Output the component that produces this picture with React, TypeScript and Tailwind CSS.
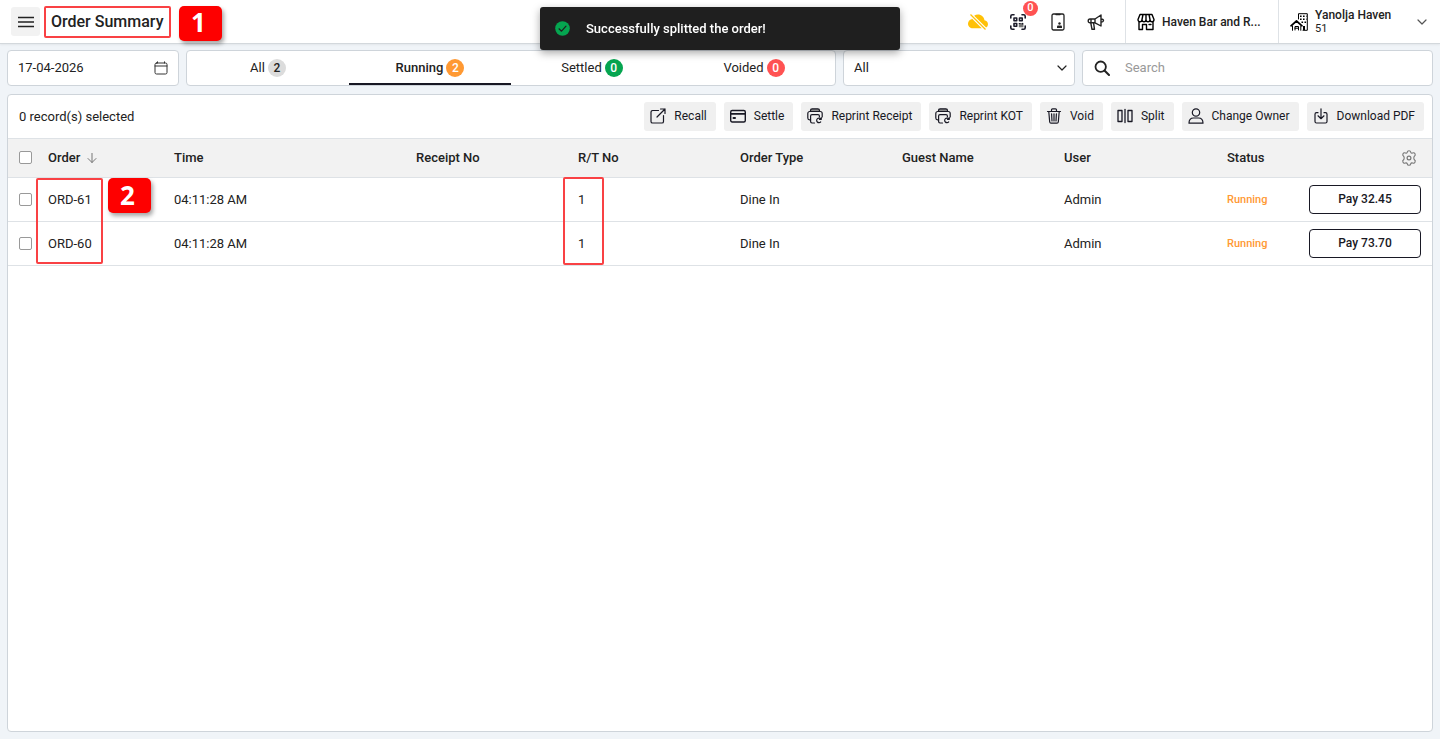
import { useState } from "react";
import type { ReactNode } from "react";
import { BsCloudSlashFill } from "react-icons/bs";

type IconProps = { className?: string; children: ReactNode; box?: string };

function Icon({ className = "size-4", children, box = "0 0 16 16" }: IconProps) {
  return (
    <svg
      viewBox={box}
      className={`shrink-0 ${className}`}
      fill="none"
      stroke="currentColor"
      strokeWidth="1.2"
      strokeLinecap="round"
      strokeLinejoin="round"
      aria-hidden="true"
    >
      {children}
    </svg>
  );
}

const RecallIcon = () => (
  <Icon>
    <path d="M8.500 2.500H2.600C1.700 2.500 1 3.200 1 4.100V13.400C1 14.300 1.700 15 2.600 15H11.900C12.800 15 13.500 14.300 13.500 13.400V7.500M10.500 1H15V5.500M15 1L7 9" />
  </Icon>
);

const SettleIcon = () => (
  <Icon>
    <rect x="0.700" y="2.500" width="14.600" height="11.500" rx="1.500" strokeWidth="1.400" />
    <path d="M1 5.800H15" strokeWidth="1.800" />
    <path d="M3.500 10H5" strokeWidth="2" />
  </Icon>
);

const ReprintIcon = () => (
  <Icon>
    <path d="M3.500 3.500V2.500C3.500 1.500 4.200 .8 5.200 .8H10.800C11.800 .8 12.500 1.500 12.500 2.500V3.500Z" fill="#8a8a8a" />
    <path d="M3.500 11.800H2.600C1.600 11.800.8 11 .8 10V5.500C.8 4.400 1.700 3.500 2.800 3.500H13.200C14.300 3.500 15.200 4.400 15.200 5.500V9" />
    <path d="M7.500 15H5C4.200 15 3.600 14.400 3.600 13.600V8C3.600 7.200 4.200 6.600 5 6.600H11C11.800 6.600 12.400 7.200 12.400 8V8.800" />
    <path d="M13.800 11A2.300 2.300 0 1 0 13.700 13.900M14.300 9.600V11.300H12.500" />
  </Icon>
);

const VoidIcon = () => (
  <Icon>
    <path d="M1.500 3.500H14.500M5.500 3.300V1.800C5.500 1.200 5.900.8 6.500.8H9.500C10.100.8 10.500 1.200 10.500 1.800V3.300M2.800 3.700L3.700 14C3.800 14.700 4.200 15.200 5 15.200H11C11.800 15.200 12.200 14.700 12.300 14L13.200 3.700M5.600 5.800L6 13M8 5.800V13M10.400 5.800L10 13" />
  </Icon>
);

const SplitIcon = () => (
  <Icon>
    <rect x="1" y="2.500" width="4" height="11" strokeWidth="1.300" />
    <rect x="11" y="2.500" width="4" height="11" strokeWidth="1.300" />
    <path d="M8 1.500V14.500" strokeWidth="1.300" />
  </Icon>
);

const OwnerIcon = () => (
  <Icon>
    <circle cx="8" cy="4.500" r="3.700" />
    <path d="M1 15.200C1 11.500 3.200 10 5.500 10H10.500C12.800 10 15 11.500 15 15.200Z" />
  </Icon>
);

const DownloadIcon = () => (
  <Icon>
    <path d="M5 4.700H3.500C2.500 4.700 2 5.200 2 6.200V13.500C2 14.500 2.500 15 3.500 15H12.500C13.500 15 14 14.500 14 13.500V6.200C14 5.200 13.500 4.700 12.500 4.700H11M8 .8V10.500M5 7.800L8 10.700L11 7.800" />
  </Icon>
);

const GearIcon = () => (
  <Icon className="size-4 text-[#777]">
    <circle cx="8" cy="8" r="1.900" />
    <path
      strokeWidth="1.100"
      d="M6.300 2.200Q6.500 .8 8 .8T9.700 2.200Q10.300 3.400 11.600 3Q13.200 2.300 14 3.800T13.400 6.200Q12.600 7.100 12.900 8Q12.600 8.900 13.400 9.800Q14.800 10.700 14 12.200T11.600 13Q10.300 12.600 9.700 13.800Q9.500 15.200 8 15.200T6.300 13.800Q5.700 12.600 4.400 13Q2.800 13.700 2 12.200T2.600 9.800Q3.400 8.900 3.100 8Q3.400 7.100 2.600 6.200Q1.200 5.300 2 3.800T4.400 3Q5.700 3.400 6.300 2.200Z"
    />
  </Icon>
);

const QrIcon = () => (
  <Icon className="size-4 text-[#1c1c2b]">
    <path strokeWidth="1.600" d="M.8 4V2.300C.8 1.300 1.300.8 2.300.8H4M12 .8H13.700C14.700.8 15.200 1.300 15.200 2.300V4M15.200 12V13.700C15.200 14.700 14.700 15.200 13.700 15.200H12M4 15.200H2.300C1.300 15.200.8 14.700.8 13.700V12" />
    <path strokeWidth="1.600" d="M4 4H6.700V6.700H4ZM9.500 4H12.200V6.700H9.500ZM4 9.500H6.700V12.200H4Z" />
    <path d="M8.800 9H13.500V13.300H8.800Z" fill="#777" stroke="none" />
    <path d="M9.300 9.500H10M12.500 9.300V10" />
  </Icon>
);

const KioskIcon = () => (
  <Icon className="h-[18px] w-[14px] text-[#222]" box="0 0 14 18">
    <rect x="1" y="1" width="12" height="16" rx="1.500" strokeWidth="1.300" />
    <path d="M5 1.500H9" strokeWidth="1.500" />
    <circle cx="8.500" cy="10.500" r="1.200" fill="currentColor" stroke="none" />
    <path d="M6 15V13.500Q6 12.500 7 12.500H10Q11 12.500 11 13.500V15Z" fill="currentColor" stroke="none" />
  </Icon>
);

const MegaphoneIcon = () => (
  <Icon className="size-[18px] text-[#222]" box="0 0 18 18">
    <path
      strokeWidth="1.400"
      d="M3 6H8L14 2V13L8 9.800H3C1.900 9.800 1.200 9 1.200 7.900S1.900 6 3 6ZM3.800 10L5 16.300H7.500L6.600 10M8 6V9.800M4 6V9.800M14.200 6Q16.500 6.200 16.500 7.600T14.200 9.300"
    />
  </Icon>
);

const StoreIcon = () => (
  <Icon className="size-[18px] text-black" box="0 0 18 18">
    <path
      strokeWidth="1.400"
      d="M3 1.500H15L17 6.500C17 9.500 13 9.500 13 6.500C13 9.500 9 9.500 9 6.500C9 9.500 5 9.500 5 6.500C5 9.500 1 9.500 1 6.500ZM9 1.500V6.500M6 1.500L5 6.500M12 1.500L13 6.500M2 9V16.500H5.500V11.500H9.500V16.500H16V9M12 11.500H14"
    />
  </Icon>
);

const HotelIcon = () => (
  <Icon className="size-[18px] text-black" box="0 0 18 18">
    <path strokeWidth="1" d="M8.500 6V.7H17.300V17.300H13" />
    <path strokeWidth="1.600" strokeDasharray="1.600 1.400" strokeLinecap="butt" d="M10 3.200H16.500M10 6.200H16.500M11.500 9.200H16.500" />
    <path strokeWidth="1.700" d="M1 12.800L6.500 8L12 12.800" />
    <path strokeWidth="1" d="M2.500 13V17.300M10.800 13V17.300M5 17V13.500H8.500V17M5 15.200H8.500" />
    <path d="M14 13V17" strokeWidth="2" strokeLinecap="butt" />
  </Icon>
);

const ChevronDown = ({ className }: { className?: string }) => (
  <Icon className={`h-2 w-[10px] ${className ?? ""}`} box="0 0 10 8">
    <path d="M1 2L5 6L9 2" />
  </Icon>
);

const tabs = [
  { label: "All", count: 2, badge: "bg-[#dcdcdc] text-[#222]" },
  { label: "Running", count: 2, badge: "bg-[#ff9933] text-white" },
  { label: "Settled", count: 0, badge: "bg-[#05a550] text-white" },
  { label: "Voided", count: 0, badge: "bg-[#ff5252] text-white" },
];

const actions = [
  { label: "Recall", icon: <RecallIcon /> },
  { label: "Settle", icon: <SettleIcon /> },
  { label: "Reprint Receipt", icon: <ReprintIcon /> },
  { label: "Reprint KOT", icon: <ReprintIcon /> },
  { label: "Void", icon: <VoidIcon /> },
  { label: "Split", icon: <SplitIcon /> },
  { label: "Change Owner", icon: <OwnerIcon /> },
  { label: "Download PDF", icon: <DownloadIcon /> },
];

const orders = [
  { id: "ORD-61", time: "04:11:28 AM", table: "1", type: "Dine In", user: "Admin", status: "Running", amount: "32.45" },
  { id: "ORD-60", time: "04:11:28 AM", table: "1", type: "Dine In", user: "Admin", status: "Running", amount: "73.70" },
];

function StepMark({ n, className }: { n: number; className: string }) {
  return (
    <span
      className={`pointer-events-none absolute z-10 flex h-[35px] w-[43px] items-center justify-center rounded-[5px] bg-[#fe0000] pr-1 pb-[2px] font-['Open_Sans',sans-serif] text-[26px] leading-none font-bold text-white shadow-[2px_3px_4px_rgba(0,0,0,0.35)] ${className}`}
    >
      {n}
    </span>
  );
}

function Outline({ className }: { className: string }) {
  return <span aria-hidden="true" className={`pointer-events-none absolute z-10 rounded-[2px] border-2 border-[#f94144] ${className}`} />;
}

function CheckBox({ label }: { label: string }) {
  return (
    <input
      type="checkbox"
      aria-label={label}
      className="block size-[13px] appearance-none rounded-[2px] border border-[#999] bg-white checked:border-[#181824] checked:bg-[#181824]"
    />
  );
}

function Header() {
  return (
    <header className="flex h-11 shrink-0 items-stretch border-b border-[#d3d8dc] bg-white shadow-[0_1px_2px_rgba(0,0,0,0.06)]">
      <div className="flex flex-1 items-center pl-[11px]">
        <button aria-label="Menu" className="flex size-[29px] items-center justify-center rounded-[3px] bg-[#f2f2f2] text-[#222]">
          <Icon>
            <path strokeWidth="1.400" d="M0 3.500H16M0 8H16M0 12.500H16" />
          </Icon>
        </button>
        <div className="relative ml-[11px]">
          <h1 className="text-base leading-5 font-medium text-[#222]">Order Summary</h1>
          <Outline className="-inset-y-[6px] -right-2 -left-[7px]" />
          <StepMark n={1} className="-top-[6px] left-[128px]" />
        </div>
      </div>
      <div className="flex items-center gap-[22px] pr-5">
        <button aria-label="Offline">
          <BsCloudSlashFill className="size-5 text-[#ffc107]" />
        </button>
        <button aria-label="QR orders" className="relative">
          <QrIcon />
          <span className="absolute -top-[13px] left-[13px] flex size-[15px] items-center justify-center rounded-full bg-[#ff5252] text-[11px] font-medium text-white">
            0
          </span>
        </button>
        <button aria-label="Kiosk" className="ml-[3px]">
          <KioskIcon />
        </button>
        <button aria-label="Announcements">
          <MegaphoneIcon />
        </button>
      </div>
      <button className="flex w-[153px] items-center gap-[7px] border-l border-[#dee2e6] pl-[11px] text-left text-xs font-medium text-[#222]">
        <StoreIcon />
        <span>Haven Bar and R...</span>
      </button>
      <button className="flex w-[162px] items-center gap-[7px] border-l border-[#dee2e6] pr-[13px] pl-[11px] text-left text-[#222]">
        <HotelIcon />
        <span className="flex-1">
          <span className="block text-xs leading-[14px] font-medium">Yanolja Haven</span>
          <span className="block text-[11px] leading-[14px]">51</span>
        </span>
        <ChevronDown className="text-[#555]" />
      </button>
    </header>
  );
}

function Filters({ active, onSelect }: { active: string; onSelect: (label: string) => void }) {
  const box = "h-9 rounded-[4px] border border-[#ced4da] bg-white";
  return (
    <div className="grid grid-cols-[172fr_650fr_232fr_351fr] gap-[7px]">
      <label className={`flex items-center px-[10px] ${box}`}>
        <input aria-label="Date" defaultValue="17-04-2026" className="w-full min-w-0 text-[13px] text-[#222] outline-none" />
        <Icon className="size-[14px] text-[#333]" box="0 0 14 14">
          <rect x="1" y="2" width="12" height="11" rx="1.500" strokeWidth="1" />
          <path strokeWidth="1" d="M1 5H13M3.500 .8V2M10.500 .8V2" />
        </Icon>
      </label>
      <div role="tablist" className={`grid grid-cols-4 ${box}`}>
        {tabs.map((t) => (
          <button
            key={t.label}
            role="tab"
            aria-selected={t.label === active}
            onClick={() => onSelect(t.label)}
            className={`flex items-center justify-center gap-[3px] border-b-2 pt-[2px] text-[13px] text-[#222] ${
              t.label === active ? "border-[#181824] font-medium" : "border-transparent"
            }`}
          >
            {t.label}
            <span className={`flex size-[18px] items-center justify-center rounded-full text-xs font-medium ${t.badge}`}>{t.count}</span>
          </button>
        ))}
      </div>
      <label className={`relative flex items-center ${box}`}>
        <select aria-label="Order type" className="h-full w-full appearance-none pl-[10px] text-[13px] text-[#222] outline-none">
          <option>All</option>
        </select>
        <ChevronDown className="pointer-events-none absolute right-[7px] text-[#222]" />
      </label>
      <label className={`flex items-center gap-[15px] pl-[11px] ${box}`}>
        <Icon className="size-4 text-[#222]">
          <circle cx="6.700" cy="6.700" r="5.200" strokeWidth="1.800" />
          <path d="M10.700 10.700L15 15" strokeWidth="2" />
        </Icon>
        <input aria-label="Search orders" placeholder="Search" className="w-full min-w-0 text-[13px] outline-none placeholder:text-[#999]" />
      </label>
    </div>
  );
}

function OrdersTable() {
  const th = "px-[10px] text-left font-medium";
  const td = "px-[10px] pt-[2px]";
  return (
    <table className="w-full table-fixed border-collapse text-[13px] text-[#222]">
      <colgroup>
        <col className="w-[30px]" />
        <col className="w-[126px]" />
        <col className="w-[242px]" />
        <col className="w-[162px]" />
        <col className="w-[162px]" />
        <col className="w-[162px]" />
        <col className="w-[162px]" />
        <col className="w-[163px]" />
        <col className="w-[82px]" />
        <col className="w-[133px]" />
      </colgroup>
      <thead>
        <tr className="h-[38px] border-b border-[#dee2e6] bg-[#f2f2f2]">
          <th className="pl-[11px] text-left">
            <CheckBox label="Select all orders" />
          </th>
          <th className={th}>
            <button className="flex items-center gap-[7px]">
              Order
              <Icon className="size-[10px] text-[#777]" box="0 0 10 10">
                <path strokeWidth="1" d="M5 0V9.500M1 5.500L5 9.500L9 5.500" />
              </Icon>
            </button>
          </th>
          <th className={th}>Time</th>
          <th className={th}>Receipt No</th>
          <th className={th}>R/T No</th>
          <th className={th}>Order Type</th>
          <th className={th}>Guest Name</th>
          <th className={th}>User</th>
          <th className={th}>Status</th>
          <th className="pr-[15px]">
            <button aria-label="Table settings" className="ml-auto block">
              <GearIcon />
            </button>
          </th>
        </tr>
      </thead>
      <tbody>
        {orders.map((o, i) => (
          <tr key={o.id} className="h-11 border-b border-[#dee2e6]">
            <td className="pl-[11px]">
              <CheckBox label={`Select ${o.id}`} />
            </td>
            <td className={td}>
              <span className="relative block">
                {o.id}
                {i === 0 && (
                  <>
                    <Outline className="-top-[12px] -left-[12px] h-[86px] w-[67px]" />
                    <StepMark n={2} className="-top-[12px] left-[60px]" />
                  </>
                )}
              </span>
            </td>
            <td className={td}>{o.time}</td>
            <td className={td} />
            <td className={td}>
              <span className="relative block">
                {o.table}
                {i === 0 && <Outline className="-top-[13px] -left-[15px] h-[88px] w-[41px]" />}
              </span>
            </td>
            <td className={td}>{o.type}</td>
            <td className={td} />
            <td className={td}>{o.user}</td>
            <td className={`text-[11px] font-medium text-[#ff9933] ${td}`}>{o.status}</td>
            <td className="pr-[11px] pl-[10px]">
              <button className="block h-[29px] w-full rounded-[4px] border border-[#181824] bg-white text-xs font-medium text-[#181824]">
                Pay {o.amount}
              </button>
            </td>
          </tr>
        ))}
      </tbody>
    </table>
  );
}

function Toast() {
  return (
    <div
      role="status"
      className="fixed top-[7px] left-1/2 z-20 flex h-[43px] w-[360px] -translate-x-1/2 items-center gap-4 rounded-[3px] bg-[#1f1f1f] px-[15px] text-[13px] font-medium text-white shadow-[0_3px_8px_rgba(0,0,0,0.35)]"
    >
      <Icon className="size-[15px] text-[#1f1f1f]" box="0 0 15 15">
        <circle cx="7.500" cy="7.500" r="7.300" fill="#05a550" stroke="none" />
        <path d="M4 7.800L6.500 10.200L11 5.200" />
      </Icon>
      Successfully splitted the order!
    </div>
  );
}

export default function App() {
  const [active, setActive] = useState("Running");
  return (
    <div className="flex min-h-screen flex-col bg-[#f0f4f8] font-[Roboto,sans-serif]">
      <Header />
      <main className="flex flex-1 flex-col gap-2 px-[7px] pt-[6px] pb-[7px]">
        <Filters active={active} onSelect={setActive} />
        <section className="flex-1 rounded-[4px] border border-[#ced4da] bg-white">
          <div className="flex h-11 items-center justify-between gap-2 border-b border-[#dee2e6] pr-2 pl-[11px]">
            <p className="text-[13px] text-[#222]">0 record(s) selected</p>
            <div className="flex gap-2">
              {actions.map((a) => (
                <button
                  key={a.label}
                  className="flex h-[29px] items-center gap-2 rounded-[3px] bg-[#f0f0f0] pr-[9px] pb-px pl-[6px] text-xs whitespace-nowrap text-[#181824]"
                >
                  {a.icon}
                  {a.label}
                </button>
              ))}
            </div>
          </div>
          <OrdersTable />
        </section>
      </main>
      <Toast />
    </div>
  );
}
